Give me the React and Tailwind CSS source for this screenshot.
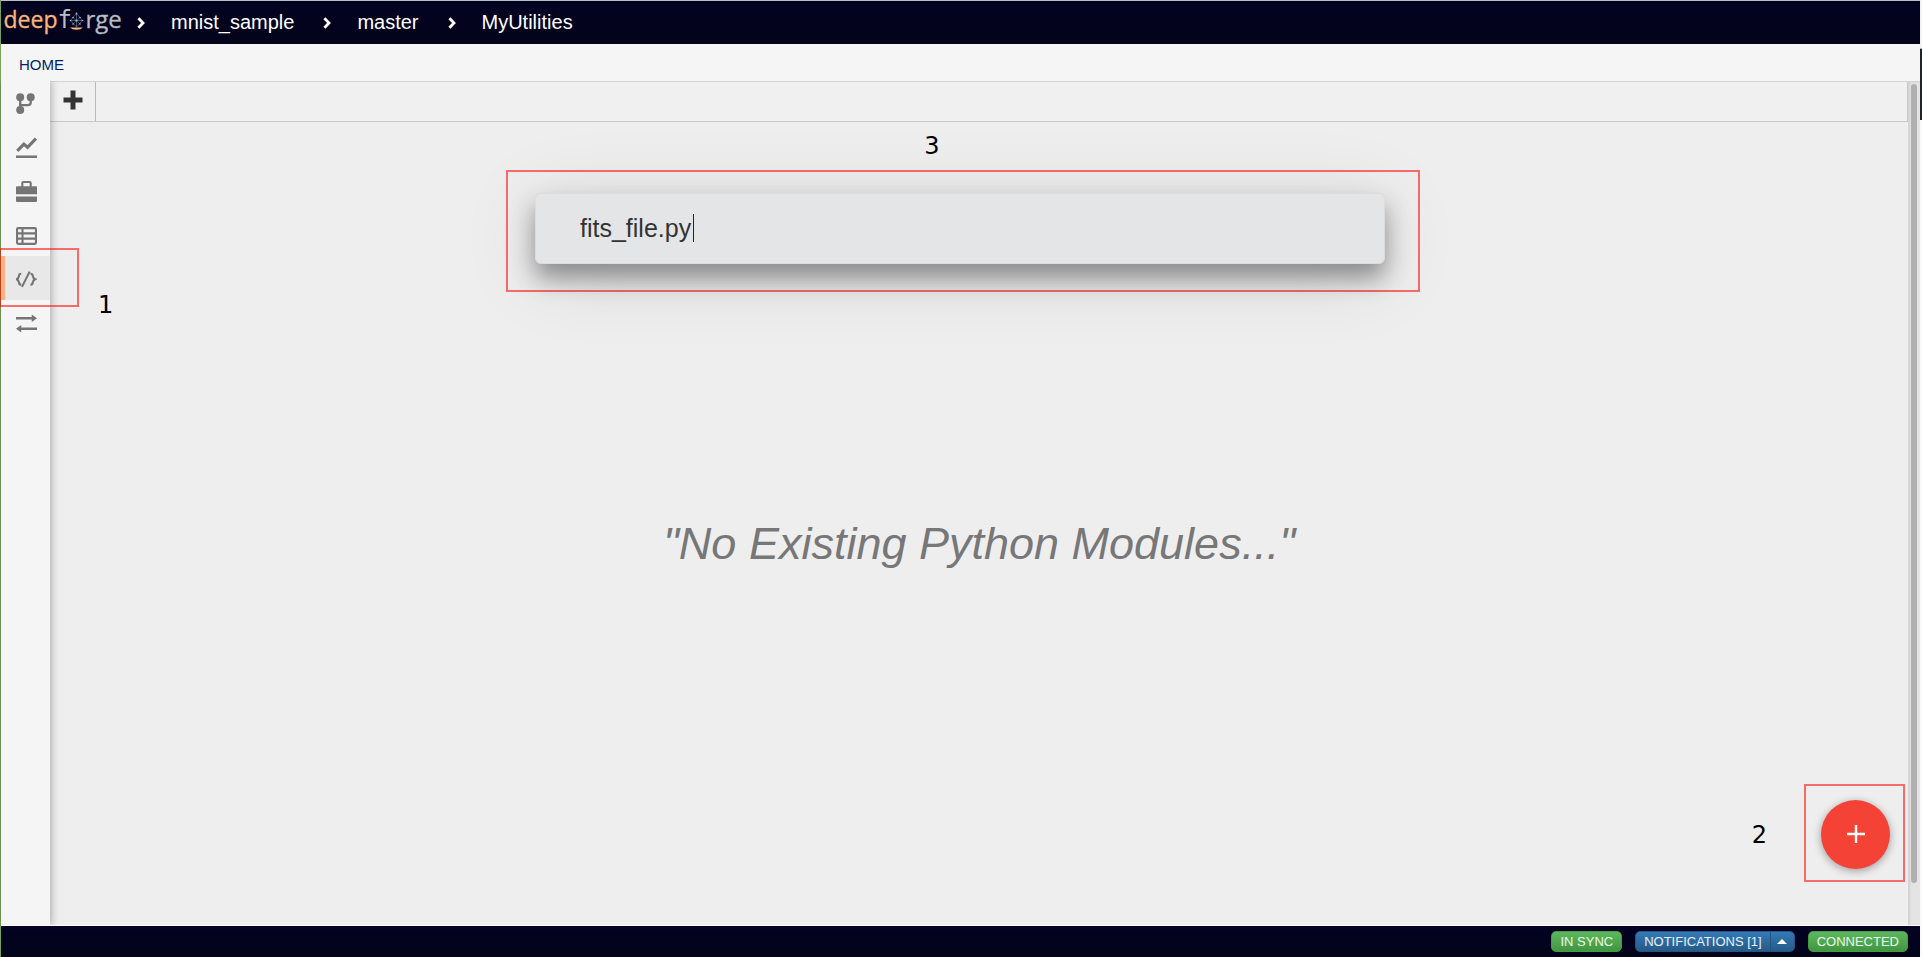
import React from "react";

function Logo() {
  return (
    <svg width="124" height="43" viewBox="0 0 124 43" role="img" aria-label="deepforge" className="block shrink-0">
      <g fontFamily="'Open Sans', sans-serif" strokeWidth="0.300">
        <text x="2.500" y="27" fontSize="23" fill="#fbb47c" stroke="#fbb47c">deep</text>
        <text x="56.500" y="27" fontSize="24" fill="#b9bcc4" fontFamily="'DejaVu Sans Mono', monospace">f</text>
        <text x="84.500" y="27" fontSize="24" fill="#b9bcc4" stroke="#b9bcc4">rge</text>
      </g>
      <path
        d="M75.500 12.500 L81.500 19.500 L75.500 26 L69.500 19.500 Z M75.500 12.500 V26 M69.500 19.500 H81.500 M72 16.500 L79 23 M79 16.500 L72 23"
        fill="none"
        stroke="#6b7f9e"
        strokeWidth="0.600"
      />
      <g fill="#a8bbd2">
        <circle cx="75.500" cy="12.500" r="0.900" />
        <circle cx="72" cy="16.500" r="0.800" />
        <circle cx="79" cy="16.500" r="0.800" />
        <circle cx="69.500" cy="19.500" r="0.800" />
        <circle cx="75.500" cy="19.500" r="1" />
        <circle cx="81.500" cy="19.500" r="0.800" />
        <circle cx="72" cy="23" r="0.800" />
        <circle cx="79" cy="23" r="0.800" />
      </g>
      <path d="M69 26.500 H82 Q80 28.800 75.500 28.800 Q71 28.800 69 26.500 Z" fill="#fbb47c" />
    </svg>
  );
}

function Chevron() {
  return (
    <svg width="8" height="12" viewBox="0 0 8 12" aria-hidden="true" className="block shrink-0">
      <path d="M1.400 1.200 L6 6 L1.400 10.800" fill="none" stroke="#fff" strokeWidth="2.800" />
    </svg>
  );
}

const icons = {
  branch: (
    <>
      <circle cx="4" cy="4" r="3.800" />
      <circle cx="14" cy="4" r="3.800" />
      <circle cx="4" cy="16.200" r="3.800" />
      <path d="M4 4 V16 M4 11.500 H11.500 Q14 11.500 14 9 V4" fill="none" stroke="currentColor" strokeWidth="2.200" />
    </>
  ),
  graph: (
    <>
      <path d="M1.200 13.200 L7.500 6.800 L11 9.800 L19 1.500" fill="none" stroke="currentColor" strokeWidth="3" />
      <path d="M0 17.600 H20 V20 H0 Z" />
    </>
  ),
  toolbox: (
    <>
      <path d="M0 6 Q0 5 1 5 H5 V2 Q5 0 7 0 H13 Q15 0 15 2 V5 H19 Q20 5 20 6 V12.500 H0 Z M7 5 H13 V2 H7 Z" fillRule="evenodd" />
      <path d="M0 14.800 H20 V19 Q20 20 19 20 H1 Q0 20 0 19 Z" />
    </>
  ),
  list: (
    <path
      fillRule="evenodd"
      d="M2 2 H18 Q20 2 20 4 V17 Q20 19 18 19 H2 Q0 19 0 17 V4 Q0 2 2 2 Z M2 4 V7 H5.200 V4 Z M7.200 4 V7 H18 V4 Z M2 9 V12 H5.200 V9 Z M7.200 9 V12 H18 V9 Z M2 14 V17 H5.200 V14 Z M7.200 14 V17 H18 V14 Z"
    />
  ),
  code: (
    <path
      fill="none"
      stroke="currentColor"
      strokeWidth="2"
      d="M5 4.500 Q3 4.500 2.800 6.500 Q2.500 9 0.600 9.700 Q2.500 10.500 2.800 12.700 Q3 15 5 15 M13 2.500 L5.700 17 M13.800 4.500 Q15.800 4.500 16 6.500 Q16.300 9 18.200 9.700 Q16.300 10.500 16 12.700 Q15.800 15 13.800 15"
    />
  ),
  swap: (
    <path d="M0 3.900 H15 V1.500 L20 5 L15 8.500 V6.100 H0 Z M20 13.900 H5 V11.500 L0 15 L5 18.500 V16.100 H20 Z" />
  ),
};

const sections = [
  { name: "Pipelines", icon: "branch" },
  { name: "Executions", icon: "graph" },
  { name: "Resources", icon: "toolbox" },
  { name: "Artifacts", icon: "list" },
  { name: "Custom Utilities", icon: "code", active: true },
  { name: "Import/Export", icon: "swap" },
];

function SideItem({ name, icon, active }) {
  return (
    <li className="relative">
      <button
        type="button"
        aria-label={name}
        className={
          active
            ? "flex h-11 w-full items-center border-l-4 border-[#ffb07c] bg-[#e8e8e8] pl-[11px] pt-[2px] text-[#757575]"
            : "flex h-11 w-full items-center pl-[15px] pt-[2px] text-[#757575]"
        }
      >
        <svg width="21" height="21" viewBox="0 0 20 20" fill="currentColor" aria-hidden="true">
          {icons[icon]}
        </svg>
      </button>
      {active && (
        <>
          <div className="pointer-events-none absolute -left-0.5 -top-2 z-20 h-[59px] w-[80px] border-2 border-[#ff0000]/55" />
          <span className="absolute left-[97px] top-[35px] z-20 font-['DejaVu_Sans',sans-serif] text-[24px] leading-[28px] text-black">1</span>
        </>
      )}
    </li>
  );
}

function Crumb({ children }) {
  return (
    <a href="#" className="pb-[2px] text-[20px] leading-6 text-white">
      {children}
    </a>
  );
}

const greenBadge =
  "h-[21px] rounded-[5px] border border-[#449d44] bg-linear-to-b from-[#5cb85c] to-[#419641] px-2 text-[13px] leading-[19px] text-white/90";

export default function App() {
  return (
    <div className="relative flex h-screen overflow-hidden bg-[#eeeeee] font-['Liberation_Sans',Arial,sans-serif]">
      <div className="flex min-w-0 flex-1 flex-col border-l border-[#7ba05b]">
        <header className="flex h-11 shrink-0 items-center border-t border-[#b9bfc0] bg-linear-to-b from-[#020222] to-[#03031a]">
          <Logo />
          <nav aria-label="Breadcrumb" className="flex items-center gap-[29px] pl-3">
            <div className="flex items-center gap-[26px]">
              <Chevron />
              <Crumb>mnist_sample</Crumb>
            </div>
            <div className="flex items-center gap-[26px]">
              <Chevron />
              <Crumb>master</Crumb>
            </div>
            <div className="flex items-center gap-[26px]">
              <Chevron />
              <Crumb>MyUtilities</Crumb>
            </div>
          </nav>
        </header>

        <div className="flex h-[37px] shrink-0 items-center bg-[#f5f5f5] pl-[18px] pt-[5px]">
          <a href="#" className="text-[15px] leading-5 text-[#001f66]">HOME</a>
        </div>

        <div className="flex min-h-0 flex-1">
          <aside className="relative z-10 w-[49px] shrink-0 bg-[#f5f5f5] shadow-[1px_0_8px_rgba(0,0,0,0.3)] [clip-path:inset(0_-200px_0_-1px)]">
            <ul className="-mt-px">
              {sections.map((s) => (
                <SideItem key={s.name} {...s} />
              ))}
            </ul>
          </aside>

          <main className="relative flex min-w-0 flex-1 flex-col border-t border-[#d4d4d4]">
            <div className="flex h-10 shrink-0 border-b border-r border-[#c8c8c8] bg-[#f0f0f0]">
              <button type="button" aria-label="New tab" className="flex w-[46px] items-center justify-center border-r border-[#b8b8b8] pb-1">
                <svg width="20" height="20" viewBox="0 0 20 20" aria-hidden="true">
                  <path d="M7.500 0.500 H12.500 V7.500 H19.500 V12.500 H12.500 V19.500 H7.500 V12.500 H0.500 V7.500 H7.500 Z" fill="#333" />
                </svg>
              </button>
            </div>

            <div className="flex flex-1 items-center justify-center pt-10">
              <p className="text-[45px] italic leading-[54px] text-[#777777]">"No Existing Python Modules..."</p>
            </div>

            <div className="absolute bottom-[43px] right-[3px] flex items-center gap-[37px]">
              <span className="pt-[3px] font-['DejaVu_Sans',sans-serif] text-[24px] leading-[28px] text-black">2</span>
              <div className="flex h-[98px] w-[101px] items-center justify-center border-2 border-[#ff0000]/55 pl-[2px] pt-[3px]">
                <button
                  type="button"
                  aria-label="Create module"
                  className="flex size-[69px] items-center justify-center rounded-full bg-[#f44336] pb-[2px] shadow-[0_2px_8px_rgba(0,0,0,0.35)]"
                >
                  <svg width="18" height="18" viewBox="0 0 18 18" aria-hidden="true">
                    <path d="M7.800 0 H10.200 V7.800 H18 V10.200 H10.200 V18 H7.800 V10.200 H0 V7.800 H7.800 Z" fill="#fff" />
                  </svg>
                </button>
              </div>
            </div>
          </main>

          <div className="w-3 shrink-0 border-t border-[#d4d4d4] bg-[#e4e4e4] px-[3px] pt-[2px] shadow-[inset_2px_0_2px_rgba(0,0,0,0.08)]">
            <div className="h-[95%] w-[6px] rounded-full bg-[#b0b0b0]" />
          </div>
        </div>

        <footer className="flex h-8 shrink-0 items-center justify-end gap-[13px] border-t border-white bg-linear-to-b from-[#020222] to-[#03031a] pr-3">
          <button type="button" className={greenBadge}>IN SYNC</button>
          <div className="flex h-[21px] overflow-hidden rounded-[5px] border border-[#245580] bg-linear-to-b from-[#337ab7] to-[#265a88] text-[13px] leading-[19px] text-white/90">
            <button type="button" className="px-2">NOTIFICATIONS [1]</button>
            <button type="button" aria-label="Show notifications" className="flex w-6 items-center justify-center border-l border-[#245580]">
              <svg width="10" height="5" viewBox="0 0 10 5" aria-hidden="true">
                <path d="M0 5 L5 0 L10 5 Z" fill="#fff" />
              </svg>
            </button>
          </div>
          <button type="button" className={greenBadge}>CONNECTED</button>
        </footer>
      </div>

      <div className="flex w-[2px] shrink-0 flex-col bg-[#fafafa]">
        <div className="h-12 bg-[#f3f3f3]" />
        <div className="h-[72px] border-t border-[#b0b0b0] bg-[#1c2429]" />
      </div>

      <div className="pointer-events-none absolute inset-x-0 top-[132px] z-30 flex flex-col items-center pl-1">
        <span className="mr-[62px] font-['DejaVu_Sans',sans-serif] text-[24px] leading-[28px] text-black">3</span>
        <div className="mt-[10px] flex h-[122px] w-[914px] items-start border-2 border-[#ff0000]/55 pl-[27px] pt-[21px]">
          <div className="relative">
            <input
              type="text"
              aria-label="Module name"
              defaultValue="fits_file.py"
              className="pointer-events-auto block h-[71px] w-[850px] rounded-[6px] border border-[#dcdcdc] bg-[#e4e5e7] px-11 text-[25px] text-[#333333] shadow-[0_14px_24px_rgba(0,0,0,0.38),0_10px_80px_rgba(0,0,0,0.12)] outline-none"
            />
            <span aria-hidden="true" className="absolute left-[158px] top-[21px] h-7 w-px bg-[#222222]" />
          </div>
        </div>
      </div>
    </div>
  );
}
